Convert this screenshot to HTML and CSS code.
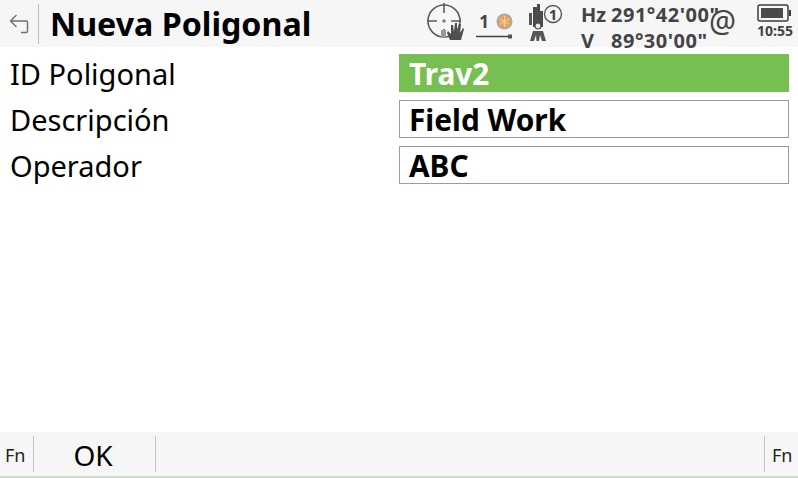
FILE: index.html
```html
<!DOCTYPE html>
<html>
<head>
    <title>Nueva Poligonal</title>
    <meta http-equiv="Content-Type" content="text/html; charset=utf-8"/>
    <link rel="stylesheet" href="styles.css">
</head>
<body>
<div class="screen">
    <div class="titleBar">
        <div class="backCell">
            <svg width="22" height="22" viewBox="0 0 22 22" fill="none" stroke="#6e6e6e" stroke-width="1.4">
                <path d="M2.5 8 L18 8 Q19.5 8 19.5 9.5 L19.5 18 Q19.5 19.5 18 19.5 L13 19.5"/>
                <path d="M8.5 2 L2.5 8 L8.5 14"/>
            </svg>
        </div>
        <h1 class="title">Nueva Poligonal</h1>
        <div class="status">
            <svg class="iconTarget" width="38" height="38" viewBox="0 0 38 38" fill="none">
                <circle cx="17" cy="18" r="16" stroke="#5c5c5c" stroke-width="1.6"/>
                <path d="M17 0 V10 M17 26 V29 M0 18 H10 M24 18 H34" stroke="#5c5c5c" stroke-width="1.6"/>
                <path d="M15 18 H19 M17 16 V20" stroke="#5c5c5c" stroke-width="1"/>
                <rect x="14" y="27" width="5" height="7" fill="#9a9a9a"/>
                <path d="M23 37 L20 30 L21 28 L24 31 L24 22 L26 22 L27 29 L28 20 L30 20 L30 29 L32 21 L34 21 L33 30 L36 25 L37 26 L34 37 Z" fill="#4f4f4f"/>
            </svg>
            <div class="prism">
                <div class="prismTop">
                    <span class="prismNum">1</span>
                    <svg width="17" height="17" viewBox="0 0 17 17">
                        <circle cx="8.5" cy="8.5" r="8" fill="#a8a8a8"/>
                        <circle cx="8.5" cy="8.5" r="6" fill="#f0a050"/>
                        <path d="M8.5 3 V14 M3.7 5.8 L13.3 11.2 M13.3 5.8 L3.7 11.2" stroke="#fbd9a8" stroke-width="1"/>
                    </svg>
                </div>
                <svg class="prismLine" width="37" height="5" viewBox="0 0 37 5">
                    <path d="M0 2.5 H33" stroke="#444" stroke-width="1.4"/>
                    <rect x="32" y="0.5" width="4" height="4" fill="#555"/>
                </svg>
            </div>
            <svg class="iconStation" width="36" height="40" viewBox="0 0 36 40" fill="none">
                <rect x="1" y="11" width="3" height="12" fill="#555"/>
                <path d="M5 5 H9 V2 H12 V9 H15 V25 H5 Z" fill="#4a4a4a"/>
                <circle cx="10" cy="24" r="3" fill="#e8e8e8" stroke="#4a4a4a" stroke-width="1.2"/>
                <path d="M5 29 L15 29 L18 39 L14 39 L12 33 L11 39 L8.5 39 L8 33 L6 39 L2 39 Z" fill="#555"/>
                <circle cx="25" cy="12" r="8.5" fill="#f6f6f6" stroke="#555" stroke-width="1.4"/>
                <text class="stationNum" x="25" y="17.5" text-anchor="middle">1</text>
            </svg>
            <div class="angles">
                <span class="angleName">Hz</span><span class="angleValue">291°42'00"</span>
                <span class="angleName">V</span><span class="angleValue">89°30'00"</span>
            </div>
            <span class="atSign">@</span>
            <div class="power">
                <svg width="36" height="18" viewBox="0 0 36 18" fill="none">
                    <rect x="1" y="1" width="30" height="16" rx="2" stroke="#3c3c3c" stroke-width="1.5"/>
                    <rect x="4" y="4" width="22" height="10" fill="#4a4a4a"/>
                    <path d="M32 6 H34 V12 H32" fill="#3c3c3c"/>
                </svg>
                <span class="clock">10:55</span>
            </div>
        </div>
    </div>

    <div class="form">
        <div class="formRow">
            <span class="fieldLabel">ID Poligonal</span>
            <span class="fieldValue active">Trav2</span>
        </div>
        <div class="formRow">
            <span class="fieldLabel">Descripción</span>
            <span class="fieldValue">Field Work</span>
        </div>
        <div class="formRow">
            <span class="fieldLabel">Operador</span>
            <span class="fieldValue">ABC</span>
        </div>
    </div>

    <div class="softKeys">
        <div class="fnKey">Fn</div>
        <div class="okKey">OK</div>
        <div class="spacer"></div>
        <div class="fnKey right">Fn</div>
    </div>
</div>
</body>
</html>
```

FILE: styles.css
```css
html, body {
    margin: 0;
    padding: 0;
    background-color: #fff;
}

body {
    font-family: "Noto Sans", "Open Sans", sans-serif;
    color: #000;
}

.screen {
    display: flex;
    flex-direction: column;
    width: 798px;
    height: 478px;
    overflow: hidden;
}

.titleBar {
    display: flex;
    align-items: center;
    flex: none;
    height: 47px;
    background-color: #f6f6f6;
}

.backCell {
    display: flex;
    align-items: center;
    justify-content: center;
    width: 38px;
    height: 40px;
    border-right: 1px solid #bdbdbd;
}

.title {
    margin: 0 0 0 11px;
    width: 376px;
    font-size: 32.2px;
    font-weight: 700;
    line-height: 47px;
    white-space: nowrap;
}

.status {
    position: relative;
    display: flex;
    align-items: flex-start;
    flex: 1;
    height: 47px;
}

.iconTarget {
    margin: 3px 0 0 1px;
    flex: none;
}

.prism {
    display: flex;
    flex-direction: column;
    flex: none;
    margin: 11px 0 0 11px;
    width: 37px;
}

.prismTop {
    display: flex;
    align-items: center;
    justify-content: flex-end;
    gap: 7px;
    height: 21px;
}

.prismNum {
    font-size: 17px;
    font-weight: 700;
    color: #444;
    line-height: 21px;
}

.prismLine {
    display: block;
    margin-top: 2px;
}

.iconStation {
    margin: 2px 0 0 15px;
    flex: none;
}

.stationNum {
    font-size: 15px;
    font-weight: 700;
    fill: #444;
}

.angles {
    display: grid;
    grid-template-columns: 30px auto;
    margin: 2px 0 0 17px;
    font-size: 20px;
    font-weight: 700;
    line-height: 26px;
    color: #444;
    white-space: nowrap;
}

.angleValue {
    letter-spacing: 0.5px;
}

.atSign {
    position: absolute;
    left: 283px;
    top: 0;
    font-size: 30px;
    line-height: 42px;
    color: #444;
}

.power {
    position: absolute;
    right: 5px;
    top: 4px;
    display: flex;
    flex-direction: column;
    align-items: flex-start;
}

.clock {
    font-size: 14px;
    font-weight: 700;
    line-height: 18px;
    color: #444;
}

.form {
    display: flex;
    flex-direction: column;
    flex: 1;
    gap: 8px;
    padding: 7px 9px 0 10px;
}

.formRow {
    display: flex;
    align-items: center;
    justify-content: space-between;
    height: 38px;
}

.fieldLabel {
    font-size: 29px;
    line-height: 40px;
    margin-bottom: -1px;
}

.fieldValue {
    box-sizing: border-box;
    width: 390px;
    height: 38px;
    padding-left: 9px;
    border: 1px solid #9c9c9c;
    font-size: 29.8px;
    font-weight: 700;
    line-height: 38px;
}

.fieldValue.active {
    border-color: #76bf50;
    background-color: #76bf50;
    color: #fff;
}

.softKeys {
    display: flex;
    align-items: center;
    flex: none;
    height: 44px;
    margin-bottom: 2px;
    background-color: #f6f6f6;
    box-shadow: 0 2px 0 #cfd8cc;
}

.fnKey {
    box-sizing: border-box;
    width: 34px;
    height: 36px;
    padding-left: 5px;
    border-right: 1px solid #c4c4c4;
    font-size: 18px;
    line-height: 38px;
    color: #222;
}

.fnKey.right {
    width: 34px;
    padding-left: 7px;
    border-right: 0;
    border-left: 1px solid #c4c4c4;
}

.okKey {
    box-sizing: border-box;
    width: 122px;
    height: 36px;
    padding-right: 3px;
    border-right: 1px solid #c4c4c4;
    font-size: 28px;
    line-height: 39px;
    text-align: center;
}

.spacer {
    flex: 1;
}
```
